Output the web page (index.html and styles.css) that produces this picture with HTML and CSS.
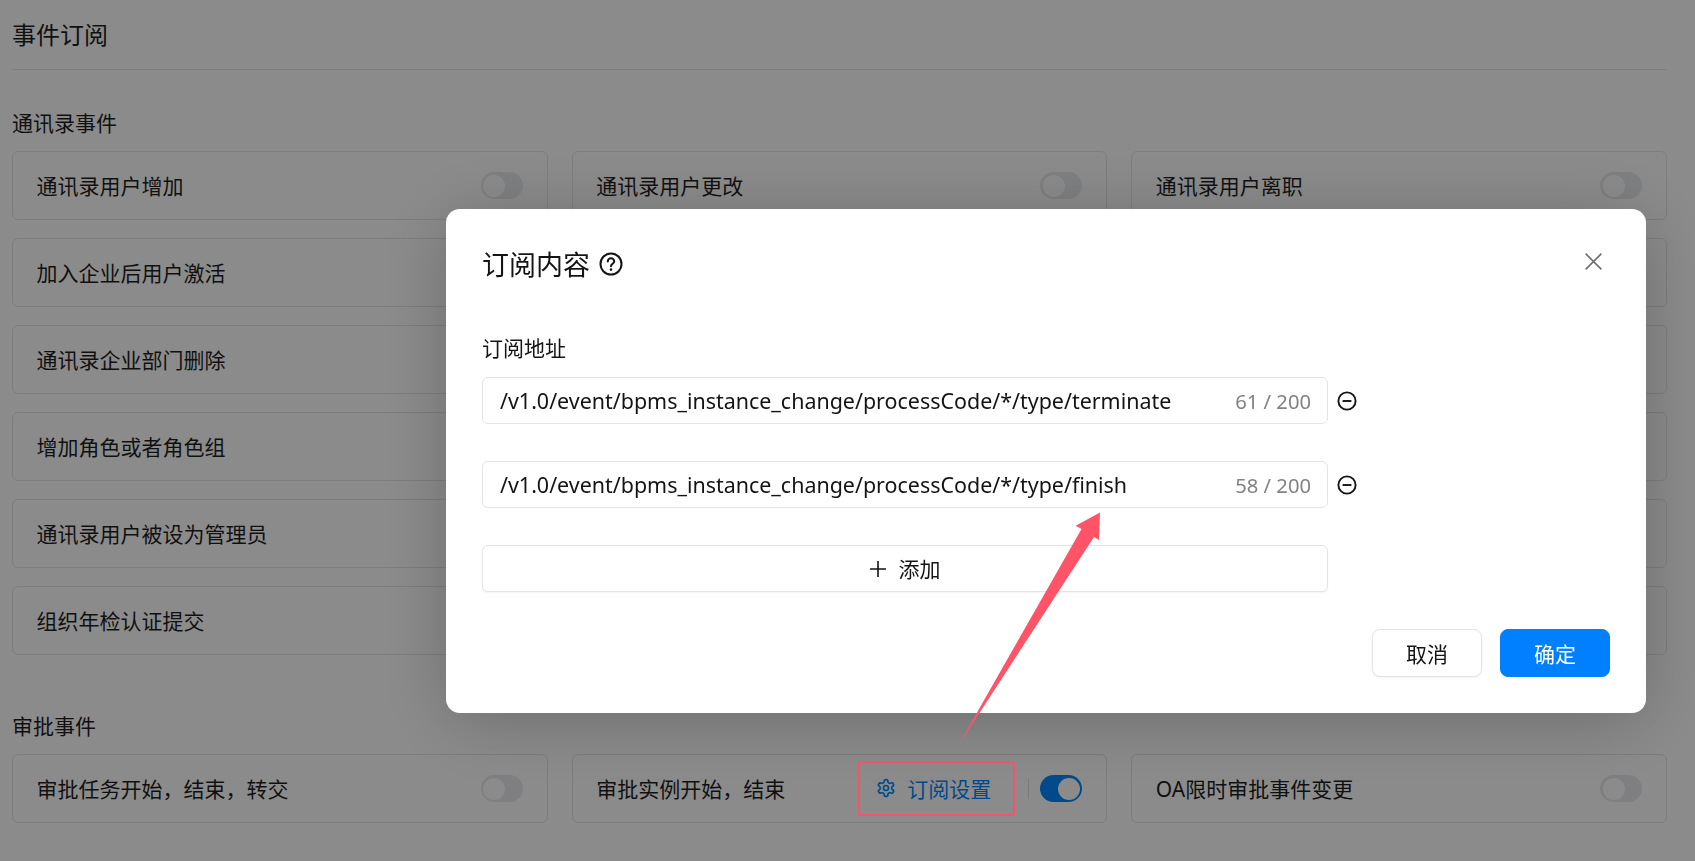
FILE: index.html
```html
<!DOCTYPE html>
<html lang="zh-CN">
<head>
<meta charset="utf-8">
<title>事件订阅</title>
<link rel="stylesheet" href="styles.css">
</head>
<body>
<main class="page">
  <h1 class="page-title">事件订阅</h1>
  <section class="group">
    <h2 class="group-title">通讯录事件</h2>
    <div class="cards">
      <div class="card"><span class="card-name">通讯录用户增加</span><span class="toggle"></span></div>
      <div class="card"><span class="card-name">通讯录用户更改</span><span class="toggle"></span></div>
      <div class="card"><span class="card-name">通讯录用户离职</span><span class="toggle"></span></div>
      <div class="card"><span class="card-name">加入企业后用户激活</span><span class="toggle"></span></div>
      <div class="card"></div>
      <div class="card"></div>
      <div class="card"><span class="card-name">通讯录企业部门删除</span><span class="toggle"></span></div>
      <div class="card"></div>
      <div class="card"></div>
      <div class="card"><span class="card-name">增加角色或者角色组</span><span class="toggle"></span></div>
      <div class="card"></div>
      <div class="card"></div>
      <div class="card"><span class="card-name">通讯录用户被设为管理员</span><span class="toggle"></span></div>
      <div class="card"></div>
      <div class="card"></div>
      <div class="card"><span class="card-name">组织年检认证提交</span><span class="toggle"></span></div>
      <div class="card"></div>
      <div class="card"></div>
    </div>
  </section>
  <section class="group group-approval">
    <h2 class="group-title">审批事件</h2>
    <div class="cards">
      <div class="card"><span class="card-name">审批任务开始，结束，转交</span><span class="toggle"></span></div>
      <div class="card">
        <span class="card-name">审批实例开始，结束</span>
        <div class="card-actions">
          <a class="sub-link">
            <svg class="gear" viewBox="0 0 24 24" fill="none" stroke="currentColor" stroke-width="2" stroke-linecap="round" stroke-linejoin="round"><path d="M12.22 2h-.44a2 2 0 0 0-2 2v.18a2 2 0 0 1-1 1.73l-.43.25a2 2 0 0 1-2 0l-.15-.08a2 2 0 0 0-2.73.73l-.22.38a2 2 0 0 0 .73 2.73l.15.1a2 2 0 0 1 1 1.72v.51a2 2 0 0 1-1 1.74l-.15.09a2 2 0 0 0-.73 2.73l.22.38a2 2 0 0 0 2.73.73l.15-.08a2 2 0 0 1 2 0l.43.25a2 2 0 0 1 1 1.73V20a2 2 0 0 0 2 2h.44a2 2 0 0 0 2-2v-.18a2 2 0 0 1 1-1.73l.43-.25a2 2 0 0 1 2 0l.15.08a2 2 0 0 0 2.73-.73l.22-.39a2 2 0 0 0-.73-2.73l-.15-.08a2 2 0 0 1-1-1.74v-.5a2 2 0 0 1 1-1.74l.15-.09a2 2 0 0 0 .73-2.73l-.22-.38a2 2 0 0 0-2.73-.73l-.15.08a2 2 0 0 1-2 0l-.43-.25a2 2 0 0 1-1-1.73V4a2 2 0 0 0-2-2z"/><circle cx="12" cy="12" r="3"/></svg>
            <span>订阅设置</span>
          </a>
          <span class="v-rule"></span>
          <span class="toggle toggle-on"></span>
        </div>
      </div>
      <div class="card"><span class="card-name">OA限时审批事件变更</span><span class="toggle"></span></div>
    </div>
  </section>
</main>

<div class="overlay"></div>

<div class="modal">
  <header class="modal-head">
    <h3 class="modal-title">订阅内容</h3>
    <svg class="help" viewBox="0 0 24 24" fill="none" stroke="currentColor" stroke-width="2"><circle cx="12" cy="12" r="10.5"/><path d="M8.8 9.4a3.2 3.2 0 0 1 6.4 0c0 2.3-3.2 2.5-3.2 4.8" stroke-linecap="round"/><circle cx="12" cy="17.6" r="1.3" fill="currentColor" stroke="none"/></svg>
    <svg class="close" viewBox="0 0 16 16" fill="none" stroke="currentColor" stroke-width="1.5"><path d="M.6.6l14.8 14.8M15.4.6L.6 15.4"/></svg>
  </header>
  <div class="modal-body">
    <label class="field-label">订阅地址</label>
    <div class="row">
      <div class="input"><span class="input-value">/v1.0/event/bpms_instance_change/processCode/*/type/terminate</span><span class="count">61 / 200</span></div>
      <svg class="minus" viewBox="0 0 20 20" fill="none" stroke="currentColor" stroke-width="1.9"><circle cx="10" cy="10" r="8.6"/><path d="M5.6 10h8.8"/></svg>
    </div>
    <div class="row">
      <div class="input"><span class="input-value">/v1.0/event/bpms_instance_change/processCode/*/type/finish</span><span class="count">58 / 200</span></div>
      <svg class="minus" viewBox="0 0 20 20" fill="none" stroke="currentColor" stroke-width="1.9"><circle cx="10" cy="10" r="8.6"/><path d="M5.6 10h8.8"/></svg>
    </div>
    <button class="add-btn" type="button">
      <svg class="plus" viewBox="0 0 16 16" fill="none" stroke="currentColor" stroke-width="1.6"><path d="M8 0v16M0 8h16"/></svg>
      <span class="add-label">添加</span>
    </button>
  </div>
  <footer class="modal-foot">
    <button class="btn" type="button">取消</button>
    <button class="btn btn-primary" type="button">确定</button>
  </footer>
</div>

<div class="mark-box"></div>
<svg class="mark-arrow" viewBox="0 0 1695 861"><polygon points="1100,512.5 1099,540 1094,537 958,746 1081.5,529 1075.7,525.7"/></svg>
</body>
</html>
```

FILE: styles.css
```css
* { box-sizing: border-box; }

html, body {
  margin: 0;
  height: 100%;
  overflow: hidden;
}

body {
  background: #fff;
  color: #1f1f1f;
  font-family: "Noto Sans", "Noto Sans CJK SC", sans-serif;
}

.page {
  padding: 0 28px 0 12px;
}

.page-title {
  margin: 0;
  height: 70px;
  font-size: 24px;
  font-weight: 400;
  line-height: 69px;
  border-bottom: 1px solid #e8e8e8;
}

.group {
  margin-top: 35px;
}

.group-approval {
  margin-top: 53px;
}

.group-title {
  margin: 0 0 10px;
  height: 36px;
  font-size: 21px;
  font-weight: 400;
  line-height: 36px;
}

.cards {
  display: grid;
  grid-template-columns: repeat(3, 1fr);
  grid-auto-rows: 69px;
  column-gap: 24px;
  row-gap: 18px;
}

.card {
  display: flex;
  align-items: center;
  justify-content: space-between;
  padding: 0 24px 0 23.5px;
  border: 1px solid #e6e6e6;
  border-radius: 6px;
}

.card-name {
  margin-top: -2px;
  font-size: 21px;
  white-space: nowrap;
}

.toggle {
  position: relative;
  flex: none;
  width: 42px;
  height: 27px;
  border-radius: 14px;
  background: #e9eaec;
}

.toggle::after {
  content: "";
  position: absolute;
  top: 2.5px;
  left: 2.5px;
  width: 22px;
  height: 22px;
  border-radius: 50%;
  background: #fff;
}

.toggle-on {
  background: #0089ff;
}

.toggle-on::after {
  left: 17.5px;
}

.card-actions {
  display: flex;
  align-items: center;
}

.sub-link {
  display: flex;
  align-items: center;
  gap: 11px;
  margin-top: -2px;
  color: #0089ff;
  font-size: 21px;
}

.gear {
  width: 20px;
  height: 20px;
}

.v-rule {
  width: 1px;
  height: 20px;
  margin: 0 11px 0 37px;
  background: #e2e2e2;
}

.overlay {
  position: fixed;
  inset: 0;
  background: rgba(0, 0, 0, 0.455);
}

.modal {
  position: fixed;
  left: 446px;
  top: 209px;
  width: 1200px;
  height: 504px;
  padding: 0 36px;
  background: #fff;
  border-radius: 14px;
  box-shadow: 0 8px 70px rgba(0, 0, 0, 0.22);
  color: #141414;
}

.modal-head {
  display: flex;
  align-items: center;
  gap: 9px;
  height: 112px;
}

.modal-title {
  margin: -4px 0 0;
  font-size: 27px;
  font-weight: 400;
}

.help {
  width: 24px;
  height: 24px;
  margin-top: -2px;
}

.close {
  width: 17px;
  height: 17px;
  margin: -8px 8px 0 auto;
  color: #6e6e6e;
}

.modal-body {
  display: flex;
  flex-direction: column;
  align-items: flex-start;
}

.field-label {
  height: 30px;
  margin-top: 12px;
  margin-bottom: 14px;
  font-size: 21px;
  line-height: 30px;
}

.row {
  display: flex;
  align-items: center;
  gap: 9px;
  margin-bottom: 37px;
}

.input {
  display: flex;
  align-items: center;
  justify-content: space-between;
  width: 846px;
  height: 47px;
  padding: 0 16px 0 17px;
  border: 1px solid #e4e4e4;
  border-radius: 6px;
  white-space: nowrap;
}

.input-value {
  margin-top: -1px;
  font-size: 21.45px;
}

.count {
  font-size: 20.2px;
  color: #828282;
}

.minus {
  width: 20px;
  height: 20px;
}

.add-btn {
  display: flex;
  align-items: center;
  justify-content: center;
  gap: 13px;
  width: 846px;
  height: 47px;
  padding: 0;
  background: #fff;
  border: 1px solid #e4e4e4;
  border-radius: 6px;
  box-shadow: 0 1px 2px rgba(0, 0, 0, 0.05);
  color: #141414;
  font: inherit;
  font-size: 21px;
}

.add-label {
  margin-top: -2px;
}

.plus {
  width: 16px;
  height: 16px;
}

.modal-foot {
  display: flex;
  justify-content: flex-end;
  gap: 18px;
  margin-top: 37px;
}

.btn {
  width: 110px;
  height: 48px;
  padding: 0;
  background: #fff;
  border: 1px solid #e4e4e4;
  border-radius: 8px;
  box-shadow: 0 1px 3px rgba(0, 0, 0, 0.05);
  color: #141414;
  font: inherit;
  font-size: 21px;
}

.btn-primary {
  background: #0080ff;
  border-color: #0080ff;
  color: #fff;
  box-shadow: none;
}

.mark-box {
  position: fixed;
  left: 858px;
  top: 761px;
  width: 157px;
  height: 55px;
  border: 2px solid #f0566b;
  border-radius: 3px;
}

.mark-arrow {
  position: fixed;
  inset: 0;
  width: 1695px;
  height: 861px;
  fill: #ff5468;
}
```
